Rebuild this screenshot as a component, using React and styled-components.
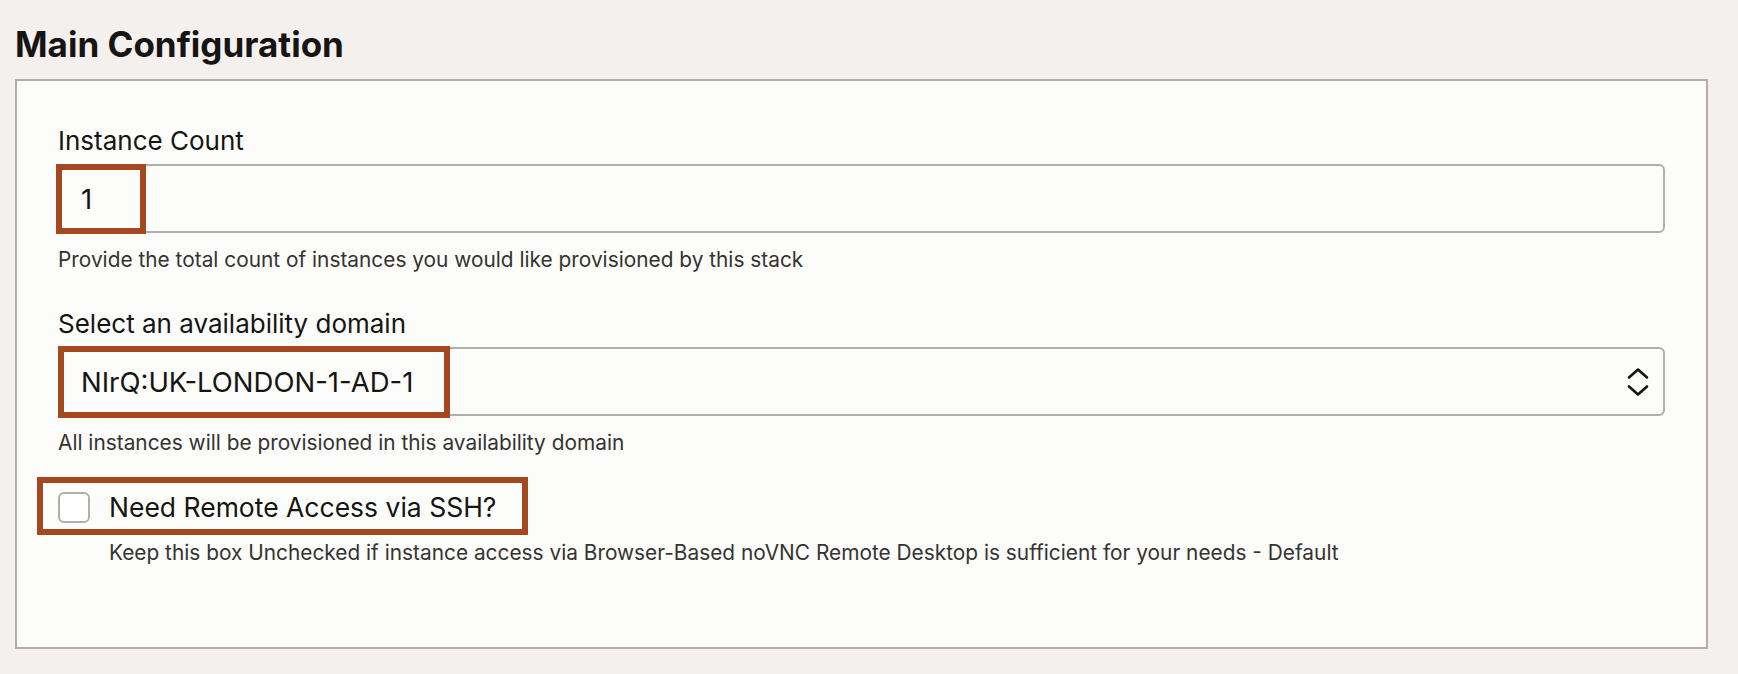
import React from "react";
import styled, { createGlobalStyle } from "styled-components";

const colors = {
  page: "#f3f0ed",
  panel: "#fcfcfb",
  border: "#b3aea9",
  text: "#161513",
  muted: "#353331",
  mark: "#a3481f",
};

const GlobalStyle = createGlobalStyle`
  body {
    margin: 0;
    background: ${colors.page};
    font-family: Inter, "Liberation Sans", Arial, sans-serif;
    color: ${colors.text};
  }
`;

const Page = styled.main({
  paddingTop: 24,
  paddingLeft: 15,
  paddingRight: 30,
  paddingBottom: 24,
});

const Title = styled.h2({
  margin: "0 0 14px",
  fontSize: 35,
  lineHeight: "41px",
  fontWeight: 700,
});

const Panel = styled.section({
  boxSizing: "border-box",
  background: colors.panel,
  border: `2px solid ${colors.border}`,
  padding: "45px 41px 82px",
  display: "flex",
  flexDirection: "column",
});

const Field = styled.div(({ spaced }) => ({
  display: "flex",
  flexDirection: "column",
  marginTop: spaced ? 37 : 0,
}));

const Label = styled.label({
  fontSize: 26,
  lineHeight: "30px",
  marginBottom: 8,
});

const Control = styled.div({
  position: "relative",
  boxSizing: "border-box",
  height: 69,
  border: `2px solid ${colors.border}`,
  borderRadius: 6,
  background: colors.panel,
  display: "flex",
  alignItems: "center",
  justifyContent: "space-between",
  padding: "0 14px 0 21px",
  fontSize: 27.5,
});

const Help = styled.p(({ indent }) => ({
  margin: `${indent ? 17 : 15}px 0 0`,
  paddingLeft: indent || 0,
  fontSize: 20.85,
  lineHeight: "24px",
  color: colors.muted,
}));

// red annotation frames laid over the form
const Mark = styled.span(({ top, left, width, height }) => ({
  position: "absolute",
  top,
  left,
  width,
  height,
  boxSizing: "border-box",
  border: `6px solid ${colors.mark}`,
  pointerEvents: "none",
}));

const CheckRow = styled.div({
  position: "relative",
  display: "flex",
  alignItems: "center",
  gap: 19,
  marginTop: 36,
  height: 33,
  fontSize: 26.5,
  lineHeight: "33px",
});

const Box = styled.span({
  boxSizing: "border-box",
  width: 32,
  height: 31,
  border: `2px solid ${colors.border}`,
  borderRadius: 6,
  background: "#fff",
  flexShrink: 0,
});

const Chevrons = () => (
  <svg width="22" height="32" viewBox="0 0 22 32" fill="none">
    <path
      d="M2 11.5 L11 3.5 L20 11.5"
      stroke="#161513"
      strokeWidth="2.6"
      strokeLinecap="round"
      strokeLinejoin="round"
    />
    <path
      d="M2 20.5 L11 28.5 L20 20.5"
      stroke="#161513"
      strokeWidth="2.6"
      strokeLinecap="round"
      strokeLinejoin="round"
    />
  </svg>
);

const App = () => (
  <Page>
    <GlobalStyle />
    <Title>Main Configuration</Title>
    <Panel>
      <Field>
        <Label>Instance Count</Label>
        <Control>
          <span>1</span>
          <Mark top={-2} left={-4} width={90} height={70} />
        </Control>
        <Help>Provide the total count of instances you would like provisioned by this stack</Help>
      </Field>

      <Field spaced>
        <Label>Select an availability domain</Label>
        <Control>
          <span>NIrQ:UK-LONDON-1-AD-1</span>
          <Chevrons />
          <Mark top={-3} left={-2} width={392} height={72} />
        </Control>
        <Help>All instances will be provisioned in this availability domain</Help>
      </Field>

      <CheckRow>
        <Box />
        <span>Need Remote Access via SSH?</span>
        <Mark top={-14} left={-21} width={491} height={58} />
      </CheckRow>
      <Help indent={51}>
        Keep this box Unchecked if instance access via Browser-Based noVNC Remote Desktop is sufficient for your needs - Default
      </Help>
    </Panel>
  </Page>
);

export default App;
